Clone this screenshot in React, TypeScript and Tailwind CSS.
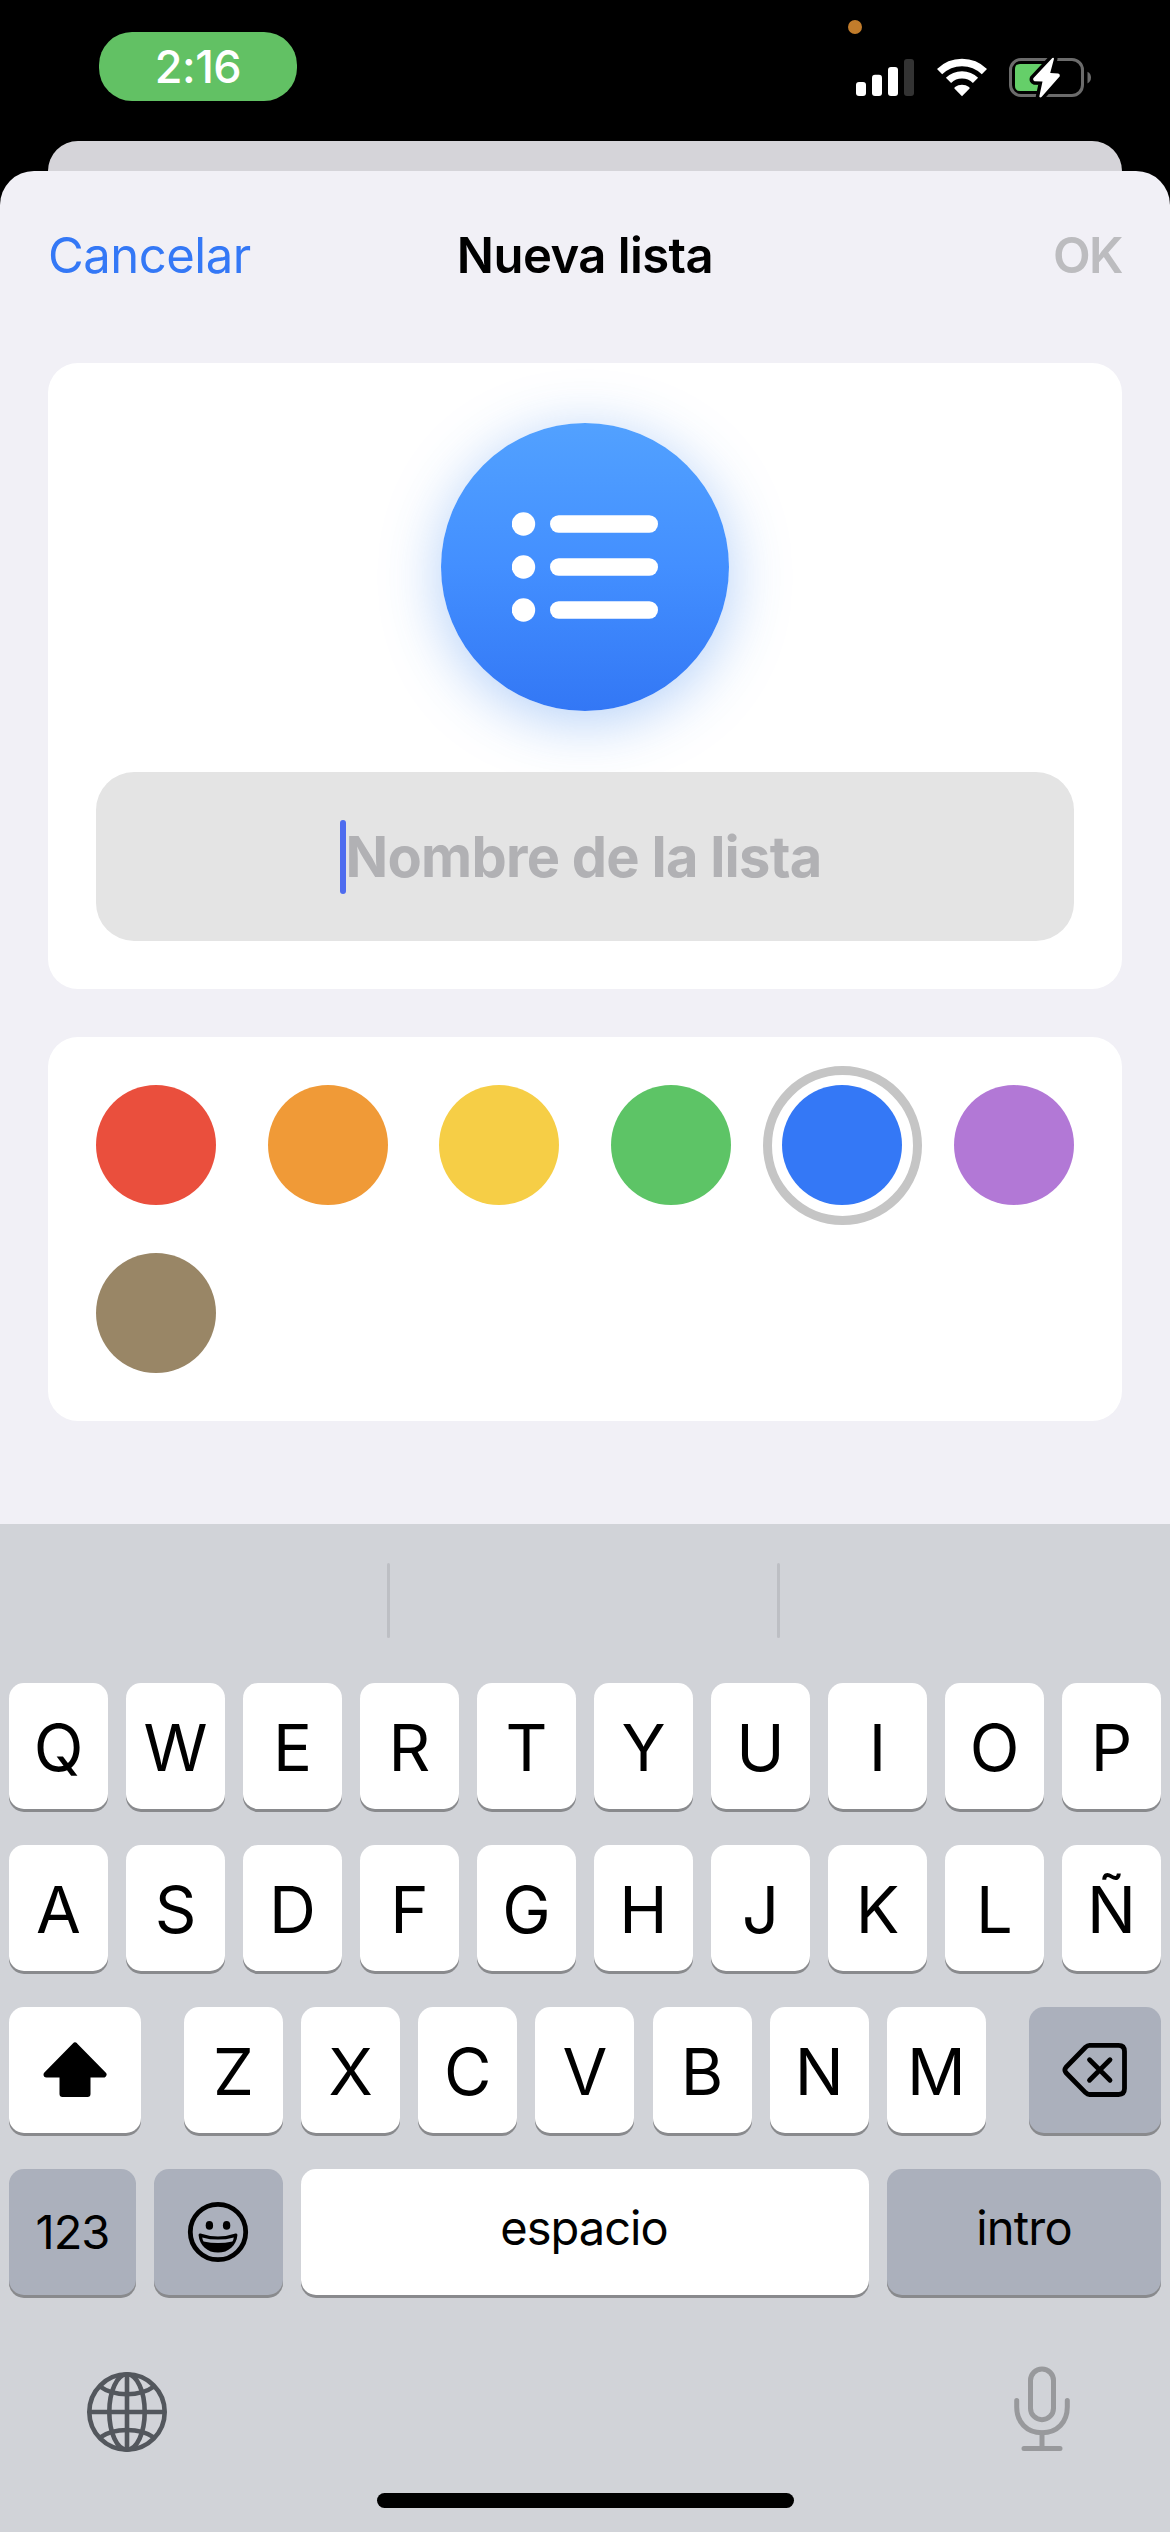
import React from 'react';

const TOP_ROW = ['Q', 'W', 'E', 'R', 'T', 'Y', 'U', 'I', 'O', 'P'];
const HOME_ROW = ['A', 'S', 'D', 'F', 'G', 'H', 'J', 'K', 'L', 'Ñ'];
const BOTTOM_ROW = ['Z', 'X', 'C', 'V', 'B', 'N', 'M'];

const SWATCHES = [
  { name: 'red', color: 'bg-[#ea4f3d]' },
  { name: 'orange', color: 'bg-[#f09a37]' },
  { name: 'yellow', color: 'bg-[#f6ce46]' },
  { name: 'green', color: 'bg-[#5dc466]' },
  { name: 'blue', color: 'bg-[#3478f6]', selected: true },
  { name: 'purple', color: 'bg-[#b278d6]' },
  { name: 'brown', color: 'bg-[#998666]' },
];

interface KeyProps {
  className?: string;
  dark?: boolean;
  children: React.ReactNode;
}

const Key: React.FC<KeyProps> = ({ className = 'w-[99px] pt-[3px] text-[65px]', dark, children }) => (
  <button
    className={`flex h-[126px] shrink-0 items-center justify-center rounded-[15px] leading-none shadow-[0_3px_0_#898a8d] ${
      dark ? 'bg-[#abb0bc]' : 'bg-white'
    } ${className}`}
  >
    {children}
  </button>
);

const StatusBar = () => (
  <div className="relative flex h-[141px] items-start justify-between bg-black pl-[99px] pr-[78px]">
    <div className="mt-8 flex h-[69px] w-[198px] items-center justify-center rounded-[33px] bg-[#62c164] text-[45px] font-medium leading-none tracking-[-0.5px] text-white">
      2:16
    </div>

    {/* microphone in use */}
    <div className="absolute left-[848px] top-5 h-[14px] w-[14px] rounded-full bg-[#c17c2b]" />

    <div className="mt-[56px] flex items-start">
      <svg width="59" height="42" viewBox="0 0 59 42" className="mr-[21px]">
        <rect x="0" y="26" width="10" height="14" rx="3" fill="#fff" />
        <rect x="16" y="18.7" width="10" height="21.3" rx="3" fill="#fff" />
        <rect x="32" y="11" width="10" height="29" rx="3" fill="#fff" />
        <rect x="48" y="3" width="10" height="37" rx="3" fill="#333" />
      </svg>
      <svg width="52" height="42" viewBox="0 0 52 42" className="mr-5">
        <path d="M3.6 15.6 A32 32 0 0 1 48.4 15.6" fill="none" stroke="#fff" strokeWidth="7.4" />
        <path d="M12.5 24.4 A19.2 19.2 0 0 1 39.5 24.4" fill="none" stroke="#fff" strokeWidth="7.4" />
        <path d="M26 40.2 L18.4 32.4 Q18.2 31.6 19 31 A12 12 0 0 1 33 31 Q33.8 31.6 33.6 32.4 Z" fill="#fff" />
      </svg>
      <svg width="84" height="44" viewBox="0 0 84 44">
        <rect x="2.5" y="3.5" width="72" height="36" rx="10.5" fill="none" stroke="#6b6b6b" strokeWidth="3" />
        <path d="M79.5 15.8 Q83 17.5 83 21.6 Q83 25.8 79.5 27.4 Z" fill="#6b6b6b" />
        <path d="M12 8 H36 V35 H12 Q7 35 7 30 V13 Q7 8 12 8 Z" fill="#65cf69" />
        <path
          d="M44.3 2 L25.3 22.3 Q24.5 24.5 26.5 25.2 L34.5 25.4 L31.3 40.5 Q32 42 33.5 41 L51.8 20.2 Q52.3 18.2 50.3 17.4 L42.2 17 L46 2.8 Q45.7 1 44.3 2 Z"
          fill="#fff"
          stroke="#000"
          strokeWidth="7"
          strokeLinejoin="round"
          paintOrder="stroke"
        />
      </svg>
    </div>
  </div>
);

const ListBadge = () => (
  <div className="flex h-[288px] w-[288px] items-center justify-center rounded-full bg-linear-to-b from-[#52a1ff] via-[#438fff] to-[#3377f5] shadow-[0_10px_60px_rgba(52,130,236,0.38)]">
    <svg width="146" height="110" viewBox="0 0 146 110" fill="#fff">
      {[12, 55, 98].map((y) => (
        <g key={y}>
          <circle cx="11.5" cy={y} r="11.7" />
          <rect x="38" y={y - 8.7} width="108" height="17.4" rx="8.7" />
        </g>
      ))}
    </svg>
  </div>
);

const ShiftIcon = () => (
  <svg width="64" height="56" viewBox="0 0 64 56">
    <path d="M32 3.5 L60.5 32.5 H44.5 V52 H19.5 V32.5 H3.5 Z" stroke="#000" strokeWidth="6" strokeLinejoin="round" />
  </svg>
);

const DeleteIcon = () => (
  <svg width="66" height="56" viewBox="0 0 66 56" fill="none" stroke="#000" strokeWidth="4.8" strokeLinecap="round" strokeLinejoin="round">
    <path d="M27.5 3.4 H56.5 Q62.5 3.4 62.5 9.4 V46.6 Q62.5 52.5 56.5 52.5 H27.5 Q25.5 52.5 23.5 50.6 L4 30.8 Q1.8 28 4 25.2 L23.5 5.3 Q25.5 3.4 27.5 3.4 Z" />
    <path d="M27.5 17.8 L48 38.2 M48 17.8 L27.5 38.2" />
  </svg>
);

const EmojiIcon = () => (
  <svg width="62" height="62" viewBox="0 0 62 62">
    <circle cx="31" cy="31" r="27.7" fill="none" stroke="#000" strokeWidth="4.8" />
    <ellipse cx="22.4" cy="24.4" rx="3.7" ry="4.3" />
    <ellipse cx="39.6" cy="24.4" rx="3.7" ry="4.3" />
    <path d="M13.5 32.6 Q31 38.6 48.5 32.6 Q50.6 32.2 50.4 34.2 C49.5 44.5 41.5 51.6 31 51.6 C20.5 51.6 12.5 44.5 11.6 34.2 Q11.4 32.2 13.5 32.6 Z" />
    <path d="M15.2 36.4 Q31 40.8 46.8 36.4 Q46.5 38.6 45.4 40.4 Q31 43.6 16.6 40.4 Q15.5 38.6 15.2 36.4 Z" fill="#abb0bc" />
  </svg>
);

const GlobeIcon = () => (
  <svg width="82" height="82" viewBox="0 0 82 82" fill="none" stroke="#53575d" strokeWidth="4.6">
    <circle cx="41" cy="41" r="37.7" />
    <ellipse cx="41" cy="41" rx="17.7" ry="37.7" />
    <path d="M41 3.5 V78.5 M3.5 41 H78.5" />
    <path d="M14 15.5 Q24.5 23.2 41 23.2 Q57.5 23.2 68 15.5" />
    <path d="M14 66.5 Q24.5 59 41 59 Q57.5 59 68 66.5" />
  </svg>
);

const MicIcon = () => (
  <svg width="58" height="88" viewBox="0 0 58 88" fill="none" stroke="#98999c" strokeWidth="5" strokeLinecap="round">
    <rect x="17.5" y="4" width="23" height="50.7" rx="11.5" />
    <path d="M3.7 35.5 V42 C3.7 57 13.5 67.7 29 67.7 C44.5 67.7 54.3 57 54.3 42 V35.5" />
    <path d="M29 68 V82 M11 83.4 H47" />
  </svg>
);

export default function App() {
  return (
    <div className="h-[2532px] w-[1170px] overflow-hidden bg-black font-['Inter',sans-serif] text-black">
      <StatusBar />
      <div className="mx-12 h-[30px] rounded-t-[30px] bg-[#d5d4d9]" />

      <div className="flex h-[2361px] flex-col rounded-t-[34px] bg-[#f1f0f6]">
        <header className="grid h-[168px] grid-cols-3 items-center px-12 text-[49px] leading-none">
          <button className="text-left tracking-[-0.5px] text-[#3478f6]">Cancelar</button>
          <h1 className="text-center font-semibold tracking-[-0.55px]">Nueva lista</h1>
          <button className="text-right font-semibold tracking-[-1.5px] text-[#bcbcbf]">OK</button>
        </header>

        <main className="mx-12 mt-6 flex flex-col gap-12">
          <section className="flex h-[626px] flex-col items-center rounded-[30px] bg-white px-12 pt-[60px]">
            <ListBadge />
            <div className="mt-[61px] flex h-[169px] w-full items-center justify-center rounded-[38px] bg-[#e4e4e4] pr-[9px]">
              <div className="h-[74px] w-[6px] rounded-full bg-[#4e6cef]" />
              <span className="text-[56px] font-bold leading-none tracking-[-0.75px] text-[#b1b1b4]">Nombre de la lista</span>
            </div>
          </section>

          <section className="grid h-[384px] grid-cols-[repeat(6,120px)] content-start justify-between gap-y-12 rounded-[30px] bg-white p-12">
            {SWATCHES.map(({ name, color, selected }) => (
              <div key={name} className={`relative h-[120px] rounded-full ${color}`}>
                {selected && <div className="absolute -inset-[19.5px] rounded-full border-[9px] border-[#c5c5c5]" />}
              </div>
            ))}
          </section>
        </main>

        <div className="mt-[103px] flex flex-1 flex-col bg-[#d1d3d8]">
          {/* empty suggestion bar */}
          <div className="flex h-[159px] gap-[387px] pl-[387px] pt-[39px]">
            <div className="h-[75px] w-[3px] rounded-full bg-[#bdbfc4]" />
            <div className="h-[75px] w-[3px] rounded-full bg-[#bdbfc4]" />
          </div>

          <div className="flex flex-col gap-9 px-[9px]">
            <div className="flex justify-between">
              {TOP_ROW.map((letter) => (
                <Key key={letter}>{letter}</Key>
              ))}
            </div>
            <div className="flex justify-between">
              {HOME_ROW.map((letter) => (
                <Key key={letter}>{letter}</Key>
              ))}
            </div>
            <div className="flex justify-between">
              <Key className="w-[132px]">
                <ShiftIcon />
              </Key>
              <div className="flex w-[802px] justify-between">
                {BOTTOM_ROW.map((letter) => (
                  <Key key={letter}>{letter}</Key>
                ))}
              </div>
              <Key dark className="w-[132px]">
                <DeleteIcon />
              </Key>
            </div>
            <div className="flex gap-[18px]">
              <Key dark className="w-[127px] pb-[2px] text-[47px] tracking-[-1px]">
                123
              </Key>
              <Key dark className="w-[129px] pr-[2px]">
                <EmojiIcon />
              </Key>
              <Key className="w-[568px] pb-[10px] pr-[2px] text-[47px] tracking-[-1px]">espacio</Key>
              <Key dark className="w-[274px] pb-[10px] text-[47px] tracking-[-0.8px]">
                intro
              </Key>
            </div>
          </div>

          <div className="mt-[70px] flex items-start justify-between pl-[86px] pr-[99px]">
            <div className="mt-[6px]">
              <GlobeIcon />
            </div>
            <MicIcon />
          </div>
          <div className="mx-auto mt-10 h-[15px] w-[417px] rounded-full bg-black" />
        </div>
      </div>
    </div>
  );
}
